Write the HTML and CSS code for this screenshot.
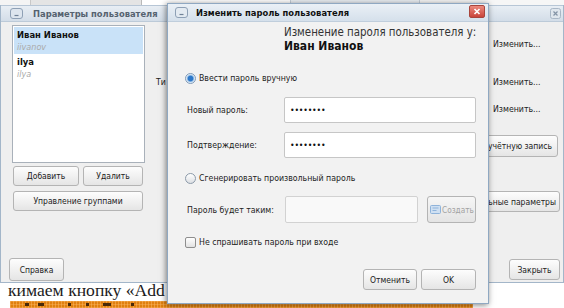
FILE: index.html
```html
<!DOCTYPE html>
<html lang="ru">
<head>
<meta charset="utf-8">
<title>Изменить пароль пользователя</title>
<link rel="stylesheet" href="styles.css">
</head>
<body>
<div class="screen">
  <div class="topstrip"><span class="ts ts1"></span><span class="ts ts2"></span><span class="ts ts3"></span><span class="ts ts4"></span><span class="ts ts5"></span></div>

  <div class="win">
    <div class="titlebar">
      <span class="wicon"><svg width="13" height="11" viewBox="0 0 13 11"><rect x="0.5" y="0.5" width="12" height="10" rx="2.5" fill="#dde5ee" stroke="#8ea0b5"/><path d="M4.5 7.5h4" stroke="#6f8197" stroke-width="1.2"/></svg></span>
      <span class="wtitle">Параметры пользователя</span>
      <span class="wclose"><svg width="11" height="11" viewBox="0 0 11 11"><rect x="0.5" y="0.5" width="10" height="10" rx="2" fill="#dfe6ed" stroke="#a9b7c6"/><path d="M3.5 3.5l4 4M7.5 3.5l-4 4" stroke="#8393a5" stroke-width="1.2"/></svg></span>
    </div>
    <div class="winbody">
      <div class="leftcol">
        <div class="userlist">
          <div class="user selected"><div class="uname">Иван Иванов</div><div class="ulogin">iivanov</div></div>
          <div class="user"><div class="uname">ilya</div><div class="ulogin">ilya</div></div>
        </div>
        <div class="btnrow"><button class="btn add">Добавить</button><button class="btn del">Удалить</button></div>
        <button class="btn groups">Управление группами</button>
        <div class="spacer"></div>
        <button class="btn help">Справка</button>
      </div>
      <div class="rightcol">
        <div class="prow r1"><span class="plabel"></span><span class="pval"></span><span class="plink">Изменить...</span></div>
        <div class="prow r2"><span class="plabel">Ти</span><span class="pval"></span><span class="plink">Изменить...</span></div>
        <div class="prow r3"><span class="plabel"></span><span class="pval"></span><span class="plink">Изменить...</span></div>
        <button class="btn rbtn rb1">Удалить учётную запись</button>
        <button class="btn rbtn rb2">Дополнительные параметры</button>
        <div class="spacer"></div>
        <button class="btn close">Закрыть</button>
      </div>
    </div>
  </div>

  <div class="caption">кимаем кнопку «Add</div>
  <div class="orange"><span class="dk d1"></span><span class="dk d2"></span><span class="dk d3"></span><span class="dk d4"></span><span class="dk d5"></span><span class="dk d6"></span></div>

  <div class="dialog">
    <div class="dtitle">
      <span class="wicon"><svg width="13" height="11" viewBox="0 0 13 11"><rect x="0.5" y="0.5" width="12" height="10" rx="2.5" fill="#e3eaf1" stroke="#8ea0b5"/><path d="M4.5 7.5h4" stroke="#6f8197" stroke-width="1.2"/></svg></span>
      <span class="dtext">Изменить пароль пользователя</span>
      <span class="dclose"><svg width="16" height="13" viewBox="0 0 16 13"><path d="M5.5 4l5 5M10.5 4l-5 5" stroke="#fff" stroke-width="1.6"/></svg></span>
    </div>
    <div class="dbody">
      <div class="dhead">
        <div class="dh1">Изменение пароля пользователя у:</div>
        <div class="dh2">Иван Иванов</div>
      </div>
      <label class="opt manual"><span class="radio on"></span>Ввести пароль вручную</label>
      <div class="form">
        <span class="flabel">Новый пароль:</span><div class="field">••••••••</div>
        <span class="flabel">Подтверждение:</span><div class="field">••••••••</div>
      </div>
      <label class="opt gen"><span class="radio"></span>Сгенерировать произвольный пароль</label>
      <div class="genrow">
        <span class="flabel">Пароль будет таким:</span>
        <div class="field off"></div>
        <button class="btn create"><svg width="11" height="9" viewBox="0 0 11 9"><rect x="0.5" y="0.5" width="10" height="8" rx="1" fill="#cfe0f2" stroke="#8fb3da"/><path d="M2.5 3h6M2.5 5.5h4" stroke="#8fb3da"/></svg><span class="ctext">Создать</span></button>
      </div>
      <label class="opt nocheck"><span class="check"></span>Не спрашивать пароль при входе</label>
      <div class="dfoot">
        <button class="btn cancel">Отменить</button>
        <button class="btn ok">OK</button>
      </div>
    </div>
  </div>
</div>
</body>
</html>
```

FILE: styles.css
```css
* { box-sizing: border-box; }
html, body { margin: 0; padding: 0; }
body {
  width: 564px;
  height: 308px;
  overflow: hidden;
  background: #fff;
  font-family: "DejaVu Sans Condensed", "DejaVu Sans", sans-serif;
  font-stretch: condensed;
  font-size: 8.7px;
  color: #222;
}
.screen { position: relative; width: 564px; height: 308px; overflow: hidden; }

/* strip of another window above */
.topstrip { height: 5px; display: flex; background: #fafafa; }
.ts1 { width: 30px; background: #f4f4f4; }
.ts2 { width: 112px; background: #e4e4e4; border-right: 1px solid #b9b9b9; border-left: 1px solid #c8c8c8; }
.ts3 { width: 148px; background: #fff; }
.ts4 { width: 130px; background: #e9eef3; border: 1px solid #c5cfd9; border-top: none; }
.ts5 { flex: 1; background: #f6f6f6; }

/* background window */
.win {
  height: 278px;
  display: flex;
  flex-direction: column;
  background: #efefef;
  border: 1px solid #a3b6c9;
  border-top: none;
}
.titlebar {
  height: 17px;
  display: flex;
  align-items: center;
  padding: 0 2px 0 9px;
  background: linear-gradient(#e8eef4, #d3dde8);
  border-top: 1px solid #b7c6d6;
  border-bottom: 1px solid #bccad8;
}
.wicon { display: flex; width: 13px; height: 11px; }
.wtitle { margin-left: 10px; font-weight: bold; font-size: 9.3px; color: #55626f; flex: 1; white-space: nowrap; }
.wclose { display: flex; }

.winbody { flex: 1; display: flex; padding: 3px 3px 1px 8px; }
.leftcol { width: 137px; display: flex; flex-direction: column; }
.userlist {
  margin-left: 3px;
  width: 133px;
  height: 138px;
  background: #fff;
  border: 1px solid #a9b1ba;
  padding: 1px;
}
.user { height: 27px; padding: 2px 0 0 3px; }
.user.selected { background: #c9e2f8; }
.uname { font-weight: bold; font-size: 9.4px; line-height: 12px; color: #111; }
.ulogin { font-style: italic; color: #aaaaaa; line-height: 13px; font-size: 9px; }

.btn {
  font-family: inherit;
  font-stretch: condensed;
  font-size: 8.5px;
  color: #222;
  background: linear-gradient(#fdfdfd, #e5e5e5);
  border: 1px solid #b4b4b4;
  border-radius: 3px;
  padding: 0 6px;
  height: 21px;
  white-space: nowrap;
}
.btnrow { display: flex; gap: 4px; margin: 3px 0 0 4px; }
.add { width: 66px; height: 20px; }
.del { width: 60px; height: 20px; }
.groups { width: 130px; height: 20px; margin: 5px 0 0 4px; }
.spacer { flex: 1; }
.help { width: 55px; height: 23px; }

.rightcol { flex: 1; display: flex; flex-direction: column; align-items: flex-end; padding-left: 10px; }
.prow { align-self: stretch; height: 24px; display: flex; align-items: center; }
.r1 { margin-top: 7px; }
.r2 { margin-top: 14px; }
.r3 { margin-top: 3px; }
.plabel { width: 13px; white-space: nowrap; color: #222; }
.pval { flex: 1; }
.plink { width: 67px; color: #222; white-space: nowrap; }
.rbtn { height: 22px; padding: 0 5px 0 6px; }
.rb1 { margin-top: 14px; margin-right: 2px; }
.rb2 { margin-top: 34px; height: 21px; padding-right: 3px; }
.close { width: 51px; margin-bottom: 1px; }

/* page below */
.caption {
  font-family: "Liberation Serif", serif;
  font-stretch: normal;
  font-size: 17.6px;
  line-height: 14px;
  padding-left: 8px;
  color: #1b1b1b;
  white-space: nowrap;
}
.orange {
  margin: 4px 0 0 10px;
  width: 463px;
  height: 10px;
  background-color: #e0800f;
  background-image:
    repeating-linear-gradient(90deg, rgba(255, 190, 110, .45) 0 1px, transparent 1px 3px),
    repeating-linear-gradient(0deg, rgba(255, 190, 110, .35) 0 1px, transparent 1px 3px);
  display: flex;
  align-items: flex-start;
}
.dk { height: 3px; background: #4a2a08; margin-top: 2px; }
.d1 { width: 4px; margin-left: 15px; }
.d2 { width: 6px; margin-left: 9px; }
.d3 { width: 3px; margin-left: 24px; }
.d4 { width: 3px; margin-left: 15px; }
.d5 { width: 8px; margin-left: 14px; }
.d6 { width: 3px; margin-left: 20px; }

/* dialog window */
.dialog {
  position: absolute;
  left: 167px;
  top: 3px;
  width: 322px;
  height: 301px;
  display: flex;
  flex-direction: column;
  background: #f2f2f2;
  border: 1px solid #8fa8c2;
  box-shadow: -1px 1px 6px rgba(0, 0, 0, .5);
}
.dtitle {
  height: 18px;
  display: flex;
  align-items: center;
  padding: 0 3px 0 7px;
  background: linear-gradient(#eaf0f6, #d5e0eb);
  border-bottom: 1px solid #c0cedc;
}
.dtext { margin-left: 8px; flex: 1; font-weight: bold; font-size: 9.3px; color: #111; white-space: nowrap; }
.dclose {
  display: flex;
  width: 16px;
  height: 13px;
  border-radius: 2px;
  background: linear-gradient(#ec8a7e, #c9443a);
  border: 1px solid #a8453c;
  margin-top: -2px;
}
.dclose svg { margin: -1px; }

.dbody { flex: 1; display: flex; flex-direction: column; padding: 3px 12px 13px 17px; }
.dhead { margin-left: 99px; }
.dh1 { font-size: 11.4px; line-height: 14px; color: #333; white-space: nowrap; }
.dh2 { font-size: 12px; line-height: 15px; font-weight: bold; color: #111; }

.opt { display: flex; align-items: center; gap: 3px; height: 14px; color: #222; white-space: nowrap; }
.manual { margin-top: 17px; }
.gen { margin-top: 13px; }
.nocheck { margin-top: 12px; }
.radio {
  width: 11px;
  height: 11px;
  border-radius: 50%;
  border: 1px solid #8c9aa9;
  background: linear-gradient(#ffffff, #dcdfe3);
}
.radio.on {
  border-color: #7f9ab8;
  background: radial-gradient(circle, #2e78c9 0 2.4px, #8fbbe6 3.2px, #e4eef8 4.2px);
}
.check {
  width: 11px;
  height: 11px;
  border-radius: 2px;
  border: 1px solid #8e8e8e;
  background: linear-gradient(#ffffff, #e2e2e2);
}

.form {
  margin-top: 12px;
  display: grid;
  grid-template-columns: 99px 192px;
  row-gap: 9px;
  align-items: center;
}
.flabel { padding-left: 2px; white-space: nowrap; color: #222; }
.field {
  height: 26px;
  background: #fff;
  border: 1px solid #c6c6c6;
  border-radius: 2px;
  padding-left: 5px;
  display: flex;
  align-items: center;
  font-size: 8.7px;
  color: #111;
  letter-spacing: -0.2px;
}
.field.off { background: #f9f9f9; border-color: #d2d2d2; }
.genrow {
  margin-top: 11px;
  display: grid;
  grid-template-columns: 91px 133px 49px;
  column-gap: 9px;
  align-items: center;
}
.genrow .field { height: 27px; }
.create {
  height: 27px;
  padding: 0 0 0 2px;
  display: flex;
  align-items: center;
  gap: 1px;
  color: #a2a2a2;
  font-size: 8.2px;
  background: linear-gradient(#f6f6f6, #e4e4e4);
}
.create svg { flex: none; }
.dfoot { margin-top: auto; display: flex; justify-content: flex-end; gap: 4px; }
.cancel { width: 54px; height: 21px; padding: 0; }
.ok { width: 55px; height: 21px; }
```
